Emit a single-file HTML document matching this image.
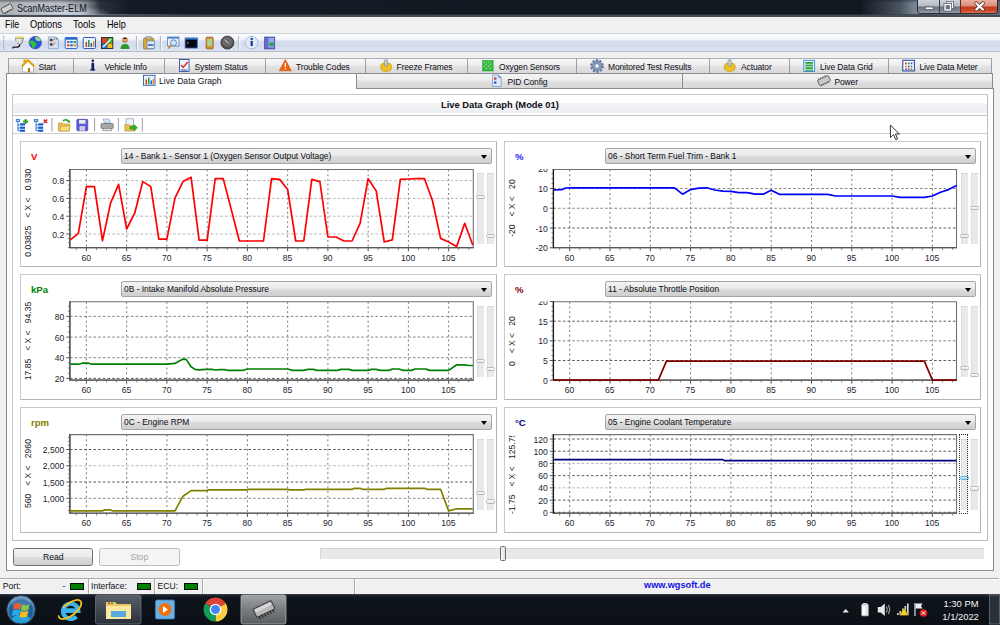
<!DOCTYPE html>
<html><head><meta charset="utf-8"><style>
*{box-sizing:border-box;margin:0;padding:0}
html,body{width:1000px;height:625px;overflow:hidden;background:#f0f0f0;font-family:"Liberation Sans",sans-serif;font-size:8.5px;color:#000}
.a{position:absolute}
.t{position:absolute;white-space:nowrap;line-height:1}
svg{position:absolute;overflow:visible}

.dd{border:1px solid #a5a5a5;border-radius:2px;background:linear-gradient(#f3f3f3 0%,#ebebeb 45%,#dddddd 50%,#cfcfcf 100%)}
.ddt{position:absolute;left:2.6px;top:3.2px;line-height:1;white-space:nowrap;font-size:8.4px;color:#0a0a14}
.dda{position:absolute;right:3.6px;top:6px;width:0;height:0;border-left:3.5px solid transparent;border-right:3.5px solid transparent;border-top:4px solid #000}
.gd{stroke:#7c7c7c;stroke-width:1;stroke-dasharray:2 2.7;fill:none}
.gh{stroke-width:1;stroke-dasharray:2.6 2.1;fill:none}
.tk{stroke:#505050;stroke-width:1}
.tm{stroke:#7a7a7a;stroke-width:0.9}
.lb{font-family:"Liberation Sans",sans-serif;font-size:8.6px;fill:#1e1e30}
.lr{font-family:"Liberation Sans",sans-serif;font-size:8.6px;fill:#1a1a1a}
.sl{background:#e7e9ea;border-top:1px solid #d8d9da;border-left:1px solid #dcdddf}
.th{border:1px solid #b9b9b9;border-radius:1.5px;background:linear-gradient(#fdfdfd,#e6e6e6)}
.thf{border-color:#6ab0dc;background:linear-gradient(#d8f0fc,#8fd0f0)}
.tab{position:absolute;top:58px;height:15px;border:1px solid #9a9ea6;border-top-color:#aeb0b6;border-bottom:none;background:linear-gradient(#f6f6f6 0%,#efefef 40%,#e2e2e2 58%,#d9d9d9 100%)}
.tab2{position:absolute;top:72.5px;height:16px;border:1px solid #898c95;background:linear-gradient(#f4f4f4 0%,#ededed 40%,#e0e0e0 58%,#d8d8d8 100%)}
.tt{position:absolute;top:3.6px;line-height:1;white-space:nowrap;font-size:8.45px;letter-spacing:-0.1px;color:#0c0c16}
.btn{position:absolute;border:1px solid #707070;border-radius:2.5px;background:linear-gradient(#f2f2f2 0%,#ebebeb 50%,#dddddd 51%,#cfcfcf 100%)}
.sbp{position:absolute;top:578.5px;height:15px;border-left:1px solid #a8a8a8}
.gb{position:absolute;top:583px;width:13.5px;height:7px;background:#008000;border:1px solid #0a0a0a}
</style></head>
<body>

<!-- title bar -->
<div class="a" style="left:0;top:0;width:1000px;height:16px;background:linear-gradient(90deg,#aeb4ba 0px,#b9bec3 60px,#8a9096 86px,#2a323c 100px,#141b24 130px,#111820 860px,#4a5460 900px,#7a8694 915px,#5a6470 1000px)"></div>
<div class="a" style="left:0;top:0;width:1000px;height:3px;background:linear-gradient(rgba(20,26,34,.45),rgba(20,26,34,0))"></div><div class="a" style="left:0;top:0;width:200px;height:15px;background:radial-gradient(ellipse 40px 8px at 72px 14px,rgba(215,230,245,.7),rgba(215,230,245,0))"></div>
<div class="a" style="left:0;top:13.8px;width:1000px;height:1.6px;background:linear-gradient(90deg,#9aa6b2 0px,#b8c8d8 80px,#5a6470 110px,#2a3038 200px,#2a3038 860px,#6a7480 1000px);opacity:.9"></div><div class="a" style="left:0;top:15.4px;width:1000px;height:1.3px;background:#454b53"></div>
<svg class="a" style="left:0;top:0" width="16" height="16"><g transform="translate(7,8.6) rotate(-28)"><rect x="-5.5" y="-2.8" width="11" height="5.6" rx="1" fill="#d0d0d0" stroke="#404040" stroke-width="0.8"/><path d="M-4,2.8 v1.4 M-1.5,2.8 v1.4 M1,2.8 v1.4 M3.5,2.8 v1.4" stroke="#404040" stroke-width="0.7"/></g></svg>
<div class="t" style="left:16.5px;top:3.7px;font-size:10.4px;color:#141826;transform:scaleX(0.868);transform-origin:0 0">ScanMaster-ELM</div>
<div class="a" style="left:917px;top:0;width:81px;height:13.8px;border:1px solid #2a2f36;border-top:none;border-radius:0 0 4px 4px;overflow:hidden">
 <div class="a" style="left:0;top:0;width:22px;height:13px;background:linear-gradient(#cfd3d8 0%,#b3b9c0 48%,#6b7581 52%,#7e8893 85%,#9aa3ac 100%);border-right:1px solid #3a4048"></div>
 <div class="a" style="left:22px;top:0;width:21px;height:13px;background:linear-gradient(#cfd3d8 0%,#b3b9c0 48%,#6b7581 52%,#7e8893 85%,#9aa3ac 100%);border-right:1px solid #6a2a20"></div>
 <div class="a" style="left:43px;top:0;width:38px;height:13px;background:linear-gradient(#eab0a2 0%,#dc8a78 48%,#c4391c 52%,#cf4a28 85%,#e07a5a 100%)"></div>
</div>
<svg class="a" style="left:910px;top:0" width="90" height="16">
 <rect x="15.2" y="7" width="8" height="2.6" fill="#fff" stroke="#3a4450" stroke-width="0.7"/>
 <rect x="37.2" y="2.2" width="5.4" height="5.4" fill="none" stroke="#3a4450" stroke-width="2.4"/>
 <rect x="37.2" y="2.2" width="5.4" height="5.4" fill="none" stroke="#fff" stroke-width="1.2"/>
 <rect x="35" y="4.4" width="5.6" height="5.6" fill="#7e8893" stroke="#3a4450" stroke-width="2.6"/>
 <rect x="35" y="4.4" width="5.6" height="5.6" fill="#6b7581" stroke="#fff" stroke-width="1.4"/>
 <path d="M66.2,3.2 L73,9.6 M73,3.2 L66.2,9.6" stroke="#4a2a28" stroke-width="3.6" stroke-linecap="round"/>
 <path d="M66.2,3.2 L73,9.6 M73,3.2 L66.2,9.6" stroke="#fff" stroke-width="2.2" stroke-linecap="round"/>
</svg>
<!-- menu -->
<div class="t" style="left:4.6px;top:20.2px;font-size:10.2px;transform:scaleX(0.87);transform-origin:0 0">File</div>
<div class="t" style="left:30.3px;top:20.2px;font-size:10.2px;transform:scaleX(0.91);transform-origin:0 0">Options</div>
<div class="t" style="left:73.4px;top:20.2px;font-size:10.2px;transform:scaleX(0.93);transform-origin:0 0">Tools</div>
<div class="t" style="left:107.4px;top:20.2px;font-size:10.2px;transform:scaleX(0.895);transform-origin:0 0">Help</div>
<!-- toolbar -->
<div class="a" style="left:0;top:33px;width:1000px;height:19px;border-top:1px solid #cdd2da;border-bottom:1px solid #b4bcc8;background:linear-gradient(#fcfdfe 0%,#f0f3f9 33%,#d8def0 42%,#d3dbee 70%,#dde4f4 100%)"></div>
<svg class="a" style="left:0;top:0" width="300" height="60"><rect x="3" y="35.5" width="1.2" height="1.2" fill="#9aa4b4"/><rect x="3" y="37.7" width="1.2" height="1.2" fill="#9aa4b4"/><rect x="3" y="39.9" width="1.2" height="1.2" fill="#9aa4b4"/><rect x="3" y="42.1" width="1.2" height="1.2" fill="#9aa4b4"/><rect x="3" y="44.3" width="1.2" height="1.2" fill="#9aa4b4"/><rect x="3" y="46.5" width="1.2" height="1.2" fill="#9aa4b4"/><rect x="3" y="48.7" width="1.2" height="1.2" fill="#9aa4b4"/><path d="M15.4,38 h8.2 l-1.2,4 q-0.5,1.8 -2.6,2 h-0.8 q-2,-0.2 -2.5,-2z" fill="#d4d4d4" stroke="#555" stroke-width="0.6"/><rect x="15.6" y="36.6" width="7.8" height="1.6" fill="#e8d84a"/><path d="M16.8,39 v4 M19.5,39 v4.8" stroke="#fff" stroke-width="0.8"/><path d="M19.8,44.2 q0,2.6 -2.4,3 h-3.6 q-1.2,0 -1.2,1.2" fill="none" stroke="#1a1a1a" stroke-width="1.3"/><circle cx="35.3" cy="42.6" r="6.3" fill="#2a52d8" stroke="#3a4a90" stroke-width="0.5"/><path d="M35,37 q4,-0.5 6.2,3 q-1.5,1.8 -3.8,1 q-2.2,-0.6 -2.4,-4z" fill="#8fdc8a"/><path d="M29.6,41.5 q2,-1.5 4,-0.5 l1.6,1.5 q1.8,0.2 1.4,2.2 l-1.4,1.4 q-0.3,2.4 -2,2.6 q-1.2,-1.6 -1.6,-3.6 q-1.8,-1 -2,-3.6z" fill="#30c030"/><path d="M48.4,36.9 h7.4 l2.6,2.6 v9.1 h-10z" fill="#cfe4f6" stroke="#7a9cc8" stroke-width="0.7"/><path d="M55.8,36.9 v2.6 h2.6z" fill="#4a8ad8"/><rect x="49.8" y="38.8" width="2.6" height="2.4" fill="#3a3a3a"/><rect x="49.8" y="43.2" width="2.6" height="2.4" fill="#3a3a3a"/><path d="M50.6,40 l1.2,1.2 l3.6,-3 M50.6,44.4 l1.2,1.2 l3.6,-3" fill="none" stroke="#e04a20" stroke-width="0.9"/><rect x="65.2" y="37.5" width="12" height="11" rx="1" fill="#e6f0fb" stroke="#2a6cc8" stroke-width="1"/><rect x="65.2" y="37.5" width="12" height="2.2" fill="#2a6cc8"/><rect x="67" y="41" width="2.5" height="2" fill="#8060c0"/><rect x="70.3" y="41" width="2.5" height="2" fill="#2080e0"/><rect x="73.6" y="41" width="2.5" height="2" fill="#20a040"/><rect x="67" y="44.3" width="2.5" height="2" fill="#e05020"/><rect x="70.3" y="44.3" width="2.5" height="2" fill="#2060c0"/><rect x="73.6" y="44.3" width="2.5" height="2" fill="#e09020"/><rect x="83.2" y="37.5" width="12.3" height="11" rx="1" fill="#eaf2fb" stroke="#2a5cb0" stroke-width="1"/><rect x="85.5" y="42" width="1.6" height="5" fill="#d04020"/><rect x="88" y="40" width="1.6" height="7" fill="#20a040"/><rect x="90.5" y="43" width="1.6" height="4" fill="#2060d0"/><rect x="93" y="41" width="1.4" height="6" fill="#e08020"/><rect x="101" y="37" width="12.3" height="12" fill="#333"/><path d="M102,38 h5 v5 h-5z" fill="#e04020"/><path d="M107.5,38 h4.8 v5 h-4.8z" fill="#3fae3a"/><path d="M102,43.5 h5 v4.5 h-5z" fill="#2a7ae0"/><path d="M107.5,43.5 h4.8 v4.5 h-4.8z" fill="#f0c020"/><path d="M103,47 l8,-8" stroke="#fff" stroke-width="1.2"/><circle cx="125" cy="40" r="2.6" fill="#a0501a"/><path d="M120.5,49 q0,-5 4.5,-5 q4.5,0 4.5,5z" fill="#2a9a2a"/><circle cx="125" cy="39.5" r="2.4" fill="#e8a060"/><path d="M122.5,39 q2.5,-3 5,0" fill="#222"/><rect x="135.9" y="36" width="1" height="14" fill="#a8acb4"/><rect x="136.9" y="36" width="1" height="14" fill="#ffffff"/><rect x="159.9" y="36" width="1" height="14" fill="#a8acb4"/><rect x="160.9" y="36" width="1" height="14" fill="#ffffff"/><rect x="238.3" y="36" width="1" height="14" fill="#a8acb4"/><rect x="239.3" y="36" width="1" height="14" fill="#ffffff"/><rect x="143.6" y="38" width="10" height="11" rx="1" fill="#e0a830" stroke="#8a6a20" stroke-width="0.7"/><rect x="146" y="36.5" width="5" height="2.5" fill="#c0c0c0" stroke="#777" stroke-width="0.5"/><rect x="147" y="41" width="7.5" height="7.5" fill="#dce8f8" stroke="#5080c0" stroke-width="0.7"/><rect x="148" y="44" width="5.5" height="2" fill="#5080c0"/><rect x="167.6" y="37" width="11.4" height="9" fill="#e8f0fa" stroke="#4a80c8" stroke-width="0.8"/><rect x="167.6" y="37" width="11.4" height="1.6" fill="#4a80c8"/><circle cx="173.5" cy="42.8" r="3" fill="#cfe6f8" stroke="#6a8ab0" stroke-width="1"/><path d="M171.3,45 l-3,3.5" stroke="#d08020" stroke-width="1.6"/><rect x="185.2" y="38" width="12" height="10" fill="#050510" stroke="#2a5ab0" stroke-width="0.9"/><rect x="185.2" y="38" width="12" height="1.6" fill="#3a78d8"/><path d="M187,42 l1.5,1 -1.5,1" stroke="#ccc" stroke-width="0.6" fill="none"/><rect x="206" y="37" width="7.3" height="12" rx="1.2" fill="#d88a30" stroke="#8a5a20" stroke-width="0.6"/><rect x="207.3" y="39" width="4.7" height="7" fill="#a8d890"/><circle cx="227.4" cy="42.6" r="6.5" fill="#505050" stroke="#303030" stroke-width="0.8"/><circle cx="227.4" cy="41.6" r="5" fill="#6a6a6a"/><path d="M224.5,39.5 l4,4" stroke="#ddd" stroke-width="0.9"/><circle cx="251.6" cy="42.6" r="6.3" fill="#dfeaf6" stroke="#9fb4cc" stroke-width="0.8"/><rect x="250.6" y="41" width="2.2" height="5" fill="#1a3aa0"/><circle cx="251.7" cy="39" r="1.2" fill="#1a3aa0"/><rect x="264.4" y="37" width="10.4" height="12" fill="#6a6ad0" stroke="#4040a0" stroke-width="0.6"/><rect x="268.5" y="38" width="5.3" height="9.5" fill="#8fb0e8"/><rect x="269.5" y="42.5" width="4" height="3.5" fill="#20a040"/></svg>
<!-- tabs row 1 -->
<div class="tab" style="left:8px;width:66px"><span class="tt" style="left:29.5px">Start</span></div>
<div class="tab" style="left:73px;width:92px"><span class="tt" style="left:30.5px">Vehicle Info</span></div>
<div class="tab" style="left:164px;width:102px"><span class="tt" style="left:29.5px">System Status</span></div>
<div class="tab" style="left:265px;width:101px"><span class="tt" style="left:30px">Trouble Codes</span></div>
<div class="tab" style="left:365px;width:103px"><span class="tt" style="left:30.5px">Freeze Frames</span></div>
<div class="tab" style="left:467px;width:110px"><span class="tt" style="left:31px">Oxygen Sensors</span></div>
<div class="tab" style="left:576px;width:134px"><span class="tt" style="left:31px">Monitored Test Results</span></div>
<div class="tab" style="left:709px;width:81px"><span class="tt" style="left:31px">Actuator</span></div>
<div class="tab" style="left:789px;width:100px"><span class="tt" style="left:30px">Live Data Grid</span></div>
<div class="tab" style="left:888px;width:104px"><span class="tt" style="left:30.5px">Live Data Meter</span></div>
<!-- content panel -->
<div class="a" style="left:6px;top:88px;width:988px;height:483px;background:#fff;border:1px solid #898c95"></div>
<div class="a" style="left:6px;top:72.5px;width:351px;height:16.5px;background:#fff;border:1px solid #898c95;border-bottom:none"></div>
<div class="tab2" style="left:356px;width:327px"><span class="tt" style="left:150.5px;top:4px">PID Config</span></div>
<div class="tab2" style="left:682px;width:311px"><span class="tt" style="left:151.5px;top:4px">Power</span></div>
<div class="t" style="left:159px;top:76.6px;font-size:8.6px;color:#10101a">Live Data Graph</div>
<svg class="a" style="left:0;top:0" width="1000" height="100"><path d="M22.5,66 l5.5,-5 l5.5,5 v6 h-11z" fill="#fff" stroke="#8a8a8a" stroke-width="0.6"/><path d="M21.8,66.3 l6.2,-6 l6.2,6" fill="none" stroke="#e0a000" stroke-width="2"/><rect x="28" y="68" width="2" height="4" fill="#b07010"/><rect x="23.5" y="59.5" width="2.5" height="3" fill="#e8a800"/><rect x="91.5" y="62.8" width="2.6" height="7.6" fill="#101a60"/><rect x="90.3" y="69.2" width="4.8" height="1.3" fill="#101a60"/><circle cx="92.8" cy="60.8" r="1.3" fill="#101a60"/><rect x="179.5" y="59.5" width="9.5" height="12" fill="#f4f8ff" stroke="#3050a0" stroke-width="0.9"/><path d="M181,65 l2.2,2.5 l4.5,-5.5" fill="none" stroke="#e02020" stroke-width="1.4"/><rect x="181" y="69.5" width="6.5" height="1" fill="#3050a0"/><path d="M285.3,59.5 l6,11.3 h-12z" fill="#f06010" stroke="#c04000" stroke-width="0.5"/><rect x="284.7" y="63" width="1.3" height="4" fill="#fff"/><rect x="284.7" y="68" width="1.3" height="1.3" fill="#fff"/><path d="M380.6,66.5 q0,-3 3,-3.4 h5 q3,0.4 3,3.4 v1.6 q-0.4,2.6 -3,3 l-2.6,0.8 l-2.6,-0.8 q-2.6,-0.4 -2.8,-3z" fill="#ecc020" stroke="#b88a10" stroke-width="0.5"/><rect x="384.4" y="59.6" width="3.2" height="6.6" rx="1.2" fill="#c8c8cc" stroke="#70747a" stroke-width="0.5"/><rect x="482.6" y="60.5" width="10.5" height="10.5" fill="#3ab840" stroke="#20a030" stroke-width="0.6"/><rect x="483.6" y="61.5" width="1.1" height="1.1" fill="#c8f4c0"/><rect x="483.6" y="65.7" width="1.1" height="1.1" fill="#c8f4c0"/><rect x="485.70000000000005" y="63.6" width="1.1" height="1.1" fill="#c8f4c0"/><rect x="485.70000000000005" y="67.8" width="1.1" height="1.1" fill="#c8f4c0"/><rect x="487.8" y="61.5" width="1.1" height="1.1" fill="#c8f4c0"/><rect x="487.8" y="65.7" width="1.1" height="1.1" fill="#c8f4c0"/><rect x="489.90000000000003" y="63.6" width="1.1" height="1.1" fill="#c8f4c0"/><rect x="489.90000000000003" y="67.8" width="1.1" height="1.1" fill="#c8f4c0"/><circle cx="597" cy="66" r="5.9" fill="none" stroke="#5a6e94" stroke-width="1.8" stroke-dasharray="2.2 1.5"/><circle cx="597" cy="66" r="4.9" fill="#8298bc" stroke="#4e6288" stroke-width="0.5"/><circle cx="597" cy="66" r="2.2" fill="#eef2f8" stroke="#4e6288" stroke-width="0.4"/><path d="M724.2,66.5 q0,-3 3,-3.4 h5 q3,0.4 3,3.4 v1.6 q-0.4,2.6 -3,3 l-2.6,0.8 l-2.6,-0.8 q-2.6,-0.4 -2.8,-3z" fill="#ecc020" stroke="#b88a10" stroke-width="0.5"/><rect x="728" y="59.6" width="3.2" height="6.6" rx="1.2" fill="#c8c8cc" stroke="#70747a" stroke-width="0.5"/><rect x="803.8" y="60.3" width="10.8" height="11.2" fill="#e8f4ff" stroke="#2a88d0" stroke-width="0.9"/><rect x="805.4" y="62" width="7.6" height="1.8" fill="#30a040"/><rect x="805.4" y="64.6" width="7.6" height="1.8" fill="#30a040"/><rect x="805.4" y="67.2" width="7.6" height="1.8" fill="#30a040"/><rect x="805.4" y="69.6" width="7.6" height="1.2" fill="#30a040"/><rect x="902.8" y="60.3" width="11.6" height="10.6" fill="#fff" stroke="#1a3aa0" stroke-width="1"/><rect x="905" y="62.5" width="1.8" height="1.8" fill="#e03030"/><rect x="907.8" y="62.5" width="1.8" height="1.8" fill="#30a030"/><rect x="910.6" y="62.5" width="1.8" height="1.8" fill="#3050e0"/><rect x="905" y="65.6" width="1.8" height="1.8" fill="#e08020"/><rect x="907.8" y="65.6" width="1.8" height="1.8" fill="#a030c0"/><rect x="910.6" y="65.6" width="1.8" height="1.8" fill="#20a0a0"/><rect x="905" y="68.3" width="1.8" height="1.6" fill="#3050e0"/><rect x="907.8" y="68.3" width="1.8" height="1.6" fill="#e03030"/><rect x="910.6" y="68.3" width="1.8" height="1.6" fill="#30a030"/><rect x="143.5" y="75.3" width="11.5" height="10" fill="#eaf2fb" stroke="#2a5cb0" stroke-width="0.9"/><rect x="145.5" y="79.5" width="1.5" height="4.8" fill="#d04020"/><rect x="148" y="77.5" width="1.5" height="6.8" fill="#20a040"/><rect x="150.5" y="80.5" width="1.5" height="3.8" fill="#2060d0"/><rect x="152.6" y="79" width="1.3" height="5.3" fill="#e08020"/><path d="M492.5,75 h6 l2.8,2.8 v8.7 h-8.8z" fill="#dbe8f7" stroke="#6a8cc0" stroke-width="0.7"/><path d="M498.5,75 v2.8 h2.8z" fill="#4a80d0"/><rect x="494" y="77.5" width="2.4" height="2.2" fill="#d03a20"/><rect x="494" y="81.5" width="2.4" height="2.2" fill="#2a5ac0"/><g transform="translate(824,80.5) rotate(-25)"><rect x="-6" y="-3" width="12" height="6" rx="1" fill="#c8c8c8" stroke="#505050" stroke-width="0.8"/><path d="M-4.5,3 v1.5 M-2,3 v1.5 M0.5,3 v1.5 M3,3 v1.5 M-4.5,-3 v-1.5 M-2,-3 v-1.5 M0.5,-3 v-1.5 M3,-3 v-1.5" stroke="#505050" stroke-width="0.7"/></g></svg>
<!-- inner panel -->
<div class="a" style="left:12px;top:94px;width:976px;height:447px;border:1px solid #c8c8c8;border-right-color:#bcbcbc;border-bottom-color:#bcbcbc"></div>
<div class="a" style="left:13px;top:95px;width:974px;height:21px;background:linear-gradient(#ffffff 0%,#ffffff 38%,#f3f4f7 40%,#eceef2 88%,#ffffff 89%,#ffffff 94%);border-bottom:1.3px solid #c2c2c2"></div>
<div class="t" style="left:441px;top:101.4px;font-size:9.35px;font-weight:bold;color:#101018">Live Data Graph (Mode 01)</div>
<div class="a" style="left:13px;top:133px;width:974px;height:1px;background:#cfcfcf"></div>
<svg class="a" style="left:0;top:0" width="200" height="140"><rect x="16.2" y="119.5" width="3.5" height="2.2" fill="#9ecbf0" stroke="#1a6ad0" stroke-width="0.7"/><path d="M17.9,121.7 v9 M17.9,125 h2 M17.9,128 h2 M17.9,130.7 h2" stroke="#1a6ad0" stroke-width="0.9" fill="none"/><rect x="20.0" y="123.3" width="5" height="2.2" fill="#1a5ad0"/><rect x="20.0" y="126.6" width="5" height="2.2" fill="#1a5ad0"/><rect x="20.0" y="129.6" width="5" height="2.2" fill="#1a5ad0"/><path d="M25.6,119 v5 M23.1,121.5 h5" stroke="#20a020" stroke-width="1.8"/><rect x="34.4" y="119.5" width="3.5" height="2.2" fill="#9ecbf0" stroke="#1a6ad0" stroke-width="0.7"/><path d="M36.1,121.7 v9 M36.1,125 h2 M36.1,128 h2 M36.1,130.7 h2" stroke="#1a6ad0" stroke-width="0.9" fill="none"/><rect x="38.199999999999996" y="123.3" width="5" height="2.2" fill="#1a5ad0"/><rect x="38.199999999999996" y="126.6" width="5" height="2.2" fill="#1a5ad0"/><rect x="38.199999999999996" y="129.6" width="5" height="2.2" fill="#1a5ad0"/><path d="M43.7,119.5 l3.5,3.5 M47.2,119.5 l-3.5,3.5" stroke="#e02020" stroke-width="1.5"/><rect x="51.4" y="118" width="1" height="13.5" fill="#a0a0a0"/><rect x="94.1" y="118" width="1" height="13.5" fill="#a0a0a0"/><rect x="117.9" y="118" width="1" height="13.5" fill="#a0a0a0"/><rect x="141.8" y="118" width="1" height="13.5" fill="#a0a0a0"/><path d="M58.5,123 h4 l1,1 h6 v7 h-11z" fill="#e8c050" stroke="#b08a20" stroke-width="0.6"/><path d="M59.5,131 l2,-5 h9 l-2,5z" fill="#f8dc80" stroke="#b08a20" stroke-width="0.5"/><path d="M63,121 q4,-3 6,1.5" fill="none" stroke="#30a030" stroke-width="1.6"/><path d="M68,121 l2.5,2.5 l-1,-3.5z" fill="#30a030"/><rect x="76.8" y="119.3" width="11" height="11.5" rx="1" fill="#5a5ad8" stroke="#3a3aa0" stroke-width="0.6"/><rect x="79" y="120" width="6.5" height="3.7" fill="#e8e8f0"/><rect x="79.5" y="126" width="5.5" height="4.8" fill="#c8c8e0"/><path d="M103,119 h6 l1.5,4 h-6z" fill="#cfe4f8" stroke="#6a8ab0" stroke-width="0.5"/><rect x="101" y="123.5" width="12.3" height="5" rx="1.2" fill="#a8a8a8" stroke="#505050" stroke-width="0.6"/><rect x="103" y="128.3" width="8.5" height="2.5" fill="#e8e8e8" stroke="#606060" stroke-width="0.5"/><rect x="126" y="118.8" width="7.5" height="8.5" fill="#eef4fb" stroke="#6a8ab0" stroke-width="0.6"/><path d="M124.8,124.5 h4 l1,1 h5 v5.5 h-10z" fill="#e8c050" stroke="#b08a20" stroke-width="0.5"/><path d="M130,126.5 h4 v-2 l3.5,3.3 l-3.5,3.3 v-2 h-4z" fill="#30b030" stroke="#208020" stroke-width="0.5"/></svg>

<div class="a" style="left:20px;top:141px;width:477px;height:126px;border:1px solid #c9c9c9;border-right-color:#b5b5b5;border-bottom-color:#b5b5b5"></div>
<div class="t" style="left:31px;top:152px;font-size:9.6px;font-weight:bold;color:#ff0000">V</div>
<div class="a dd" style="left:120.5px;top:148px;width:371px;height:16px"><span class="ddt">14 - Bank 1 - Sensor 1 (Oxygen Sensor Output Voltage)</span><span class="dda"></span></div>
<svg class="a" style="left:0;top:0" width="1000" height="625"><line x1="86.4" y1="169.5" x2="86.4" y2="247.7" class="gd"/><line x1="126.65" y1="169.5" x2="126.65" y2="247.7" class="gd"/><line x1="166.9" y1="169.5" x2="166.9" y2="247.7" class="gd"/><line x1="207.15" y1="169.5" x2="207.15" y2="247.7" class="gd"/><line x1="247.4" y1="169.5" x2="247.4" y2="247.7" class="gd"/><line x1="287.65" y1="169.5" x2="287.65" y2="247.7" class="gd"/><line x1="327.9" y1="169.5" x2="327.9" y2="247.7" class="gd"/><line x1="368.15" y1="169.5" x2="368.15" y2="247.7" class="gd"/><line x1="408.4" y1="169.5" x2="408.4" y2="247.7" class="gd"/><line x1="448.65" y1="169.5" x2="448.65" y2="247.7" class="gd"/><line x1="69.9" y1="180.6" x2="473.3" y2="180.6" class="gh" stroke="#b6b6b6"/><line x1="69.9" y1="198.4" x2="473.3" y2="198.4" class="gh" stroke="#b6b6b6"/><line x1="69.9" y1="216.2" x2="473.3" y2="216.2" class="gh" stroke="#b6b6b6"/><line x1="69.9" y1="234" x2="473.3" y2="234" class="gh" stroke="#b6b6b6"/><line x1="67.9" y1="247.35" x2="69.9" y2="247.35" class="tm"/><line x1="67.9" y1="242.9" x2="69.9" y2="242.9" class="tm"/><line x1="67.9" y1="238.45" x2="69.9" y2="238.45" class="tm"/><line x1="66.3" y1="234" x2="69.9" y2="234" class="tk"/><line x1="67.9" y1="229.55" x2="69.9" y2="229.55" class="tm"/><line x1="67.9" y1="225.1" x2="69.9" y2="225.1" class="tm"/><line x1="67.9" y1="220.65" x2="69.9" y2="220.65" class="tm"/><line x1="66.3" y1="216.2" x2="69.9" y2="216.2" class="tk"/><line x1="67.9" y1="211.75" x2="69.9" y2="211.75" class="tm"/><line x1="67.9" y1="207.3" x2="69.9" y2="207.3" class="tm"/><line x1="67.9" y1="202.85" x2="69.9" y2="202.85" class="tm"/><line x1="66.3" y1="198.4" x2="69.9" y2="198.4" class="tk"/><line x1="67.9" y1="193.95" x2="69.9" y2="193.95" class="tm"/><line x1="67.9" y1="189.5" x2="69.9" y2="189.5" class="tm"/><line x1="67.9" y1="185.05" x2="69.9" y2="185.05" class="tm"/><line x1="66.3" y1="180.6" x2="69.9" y2="180.6" class="tk"/><line x1="67.9" y1="176.15" x2="69.9" y2="176.15" class="tm"/><line x1="67.9" y1="171.7" x2="69.9" y2="171.7" class="tm"/><line x1="76.34" y1="247.7" x2="76.34" y2="250" class="tm"/><line x1="86.4" y1="247.7" x2="86.4" y2="251.3" class="tk"/><line x1="96.46" y1="247.7" x2="96.46" y2="250" class="tm"/><line x1="106.53" y1="247.7" x2="106.53" y2="250" class="tm"/><line x1="116.59" y1="247.7" x2="116.59" y2="250" class="tm"/><line x1="126.65" y1="247.7" x2="126.65" y2="251.3" class="tk"/><line x1="136.71" y1="247.7" x2="136.71" y2="250" class="tm"/><line x1="146.78" y1="247.7" x2="146.78" y2="250" class="tm"/><line x1="156.84" y1="247.7" x2="156.84" y2="250" class="tm"/><line x1="166.9" y1="247.7" x2="166.9" y2="251.3" class="tk"/><line x1="176.96" y1="247.7" x2="176.96" y2="250" class="tm"/><line x1="187.03" y1="247.7" x2="187.03" y2="250" class="tm"/><line x1="197.09" y1="247.7" x2="197.09" y2="250" class="tm"/><line x1="207.15" y1="247.7" x2="207.15" y2="251.3" class="tk"/><line x1="217.21" y1="247.7" x2="217.21" y2="250" class="tm"/><line x1="227.28" y1="247.7" x2="227.28" y2="250" class="tm"/><line x1="237.34" y1="247.7" x2="237.34" y2="250" class="tm"/><line x1="247.4" y1="247.7" x2="247.4" y2="251.3" class="tk"/><line x1="257.46" y1="247.7" x2="257.46" y2="250" class="tm"/><line x1="267.53" y1="247.7" x2="267.53" y2="250" class="tm"/><line x1="277.59" y1="247.7" x2="277.59" y2="250" class="tm"/><line x1="287.65" y1="247.7" x2="287.65" y2="251.3" class="tk"/><line x1="297.71" y1="247.7" x2="297.71" y2="250" class="tm"/><line x1="307.78" y1="247.7" x2="307.78" y2="250" class="tm"/><line x1="317.84" y1="247.7" x2="317.84" y2="250" class="tm"/><line x1="327.9" y1="247.7" x2="327.9" y2="251.3" class="tk"/><line x1="337.96" y1="247.7" x2="337.96" y2="250" class="tm"/><line x1="348.02" y1="247.7" x2="348.02" y2="250" class="tm"/><line x1="358.09" y1="247.7" x2="358.09" y2="250" class="tm"/><line x1="368.15" y1="247.7" x2="368.15" y2="251.3" class="tk"/><line x1="378.21" y1="247.7" x2="378.21" y2="250" class="tm"/><line x1="388.27" y1="247.7" x2="388.27" y2="250" class="tm"/><line x1="398.34" y1="247.7" x2="398.34" y2="250" class="tm"/><line x1="408.4" y1="247.7" x2="408.4" y2="251.3" class="tk"/><line x1="418.46" y1="247.7" x2="418.46" y2="250" class="tm"/><line x1="428.53" y1="247.7" x2="428.53" y2="250" class="tm"/><line x1="438.59" y1="247.7" x2="438.59" y2="250" class="tm"/><line x1="448.65" y1="247.7" x2="448.65" y2="251.3" class="tk"/><line x1="458.71" y1="247.7" x2="458.71" y2="250" class="tm"/><line x1="468.78" y1="247.7" x2="468.78" y2="250" class="tm"/><path d="M69.9,247.7 V169.5 H473.3 V247.7 Z" fill="none" stroke="#727272" stroke-width="1.1"/><line x1="69.9" y1="247.7" x2="473.8" y2="247.7" stroke="#5a5a5a" stroke-width="1.2"/><line x1="69.9" y1="169" x2="69.9" y2="248.2" stroke="#4a4a4a" stroke-width="1.3"/><clipPath id="cL141"><rect x="69.9" y="168.5" width="404" height="80.7"/></clipPath><polyline points="70.3,239.9 78.35,233.4 86.4,186.6 94.45,186.6 102.5,240.6 110.55,203.2 118.6,184.4 126.65,229 134.7,213.2 142.75,181.6 150.8,186.6 158.85,239.2 166.9,239.2 174.95,198.1 183,181.6 191.05,177.2 199.1,240.2 207.15,240.2 215.2,178.7 223.25,178.7 231.3,209.6 239.35,241 247.4,241 255.45,241 263.5,241 271.55,178.7 279.6,179.4 287.65,189.5 295.7,241 303.75,241 311.8,179.4 319.85,181.6 327.9,237 335.95,237 344,241 352.05,241 360.1,223.3 368.15,178.7 376.2,190.9 384.25,242 392.3,239.9 400.35,179.4 408.4,179 416.45,178.7 424.5,178.7 432.55,201 440.6,238.4 448.65,242 456.7,246.4 464.75,223.3 472.8,245" fill="none" stroke="#ff0000" stroke-width="1.7" stroke-linejoin="round" clip-path="url(#cL141)"/><clipPath id="lL141"><rect x="29.9" y="168.9" width="40" height="88.2"/></clipPath><g clip-path="url(#lL141)"><text x="64.3" y="184.1" text-anchor="end" class="lb">0.8</text><text x="64.3" y="201.9" text-anchor="end" class="lb">0.6</text><text x="64.3" y="219.7" text-anchor="end" class="lb">0.4</text><text x="64.3" y="237.5" text-anchor="end" class="lb">0.2</text></g><text x="86.2" y="260.9" text-anchor="middle" class="lb">60</text><text x="126.45" y="260.9" text-anchor="middle" class="lb">65</text><text x="166.7" y="260.9" text-anchor="middle" class="lb">70</text><text x="206.95" y="260.9" text-anchor="middle" class="lb">75</text><text x="247.2" y="260.9" text-anchor="middle" class="lb">80</text><text x="287.45" y="260.9" text-anchor="middle" class="lb">85</text><text x="327.7" y="260.9" text-anchor="middle" class="lb">90</text><text x="367.95" y="260.9" text-anchor="middle" class="lb">95</text><text x="408.2" y="260.9" text-anchor="middle" class="lb">100</text><text x="448.45" y="260.9" text-anchor="middle" class="lb">105</text><clipPath id="rL141"><rect x="20" y="141" width="20" height="120"/></clipPath><g clip-path="url(#rL141)"><text transform="translate(31.3,207.6) rotate(-90)" text-anchor="middle" class="lr">X</text><text transform="translate(31.3,215.2) rotate(-90)" text-anchor="middle" class="lr">&lt;</text><text transform="translate(31.3,200) rotate(-90)" text-anchor="middle" class="lr">&lt;</text><text transform="translate(31.3,225.7) rotate(-90)" text-anchor="end" class="lr">0.03825</text><text transform="translate(31.3,190.2) rotate(-90)" text-anchor="start" class="lr">0.930</text></g></svg>
<div class="a sl" style="left:477px;top:172.8px;width:6.8px;height:71.5px"></div>
<div class="a th" style="left:476px;top:195px;width:9px;height:4.2px"></div>
<div class="a sl" style="left:487.2px;top:172.8px;width:6.8px;height:71.5px"></div>
<div class="a th" style="left:486.2px;top:234px;width:9px;height:4.2px"></div><div class="a" style="left:504px;top:141px;width:477px;height:126px;border:1px solid #c9c9c9;border-right-color:#b5b5b5;border-bottom-color:#b5b5b5"></div>
<div class="t" style="left:515px;top:152px;font-size:9.6px;font-weight:bold;color:#2020ff">%</div>
<div class="a dd" style="left:604.5px;top:148px;width:371px;height:16px"><span class="ddt">06 - Short Term Fuel Trim - Bank 1</span><span class="dda"></span></div>
<svg class="a" style="left:0;top:0" width="1000" height="625"><line x1="569.7" y1="169.5" x2="569.7" y2="247.7" class="gd"/><line x1="610" y1="169.5" x2="610" y2="247.7" class="gd"/><line x1="650.3" y1="169.5" x2="650.3" y2="247.7" class="gd"/><line x1="690.6" y1="169.5" x2="690.6" y2="247.7" class="gd"/><line x1="730.9" y1="169.5" x2="730.9" y2="247.7" class="gd"/><line x1="771.2" y1="169.5" x2="771.2" y2="247.7" class="gd"/><line x1="811.5" y1="169.5" x2="811.5" y2="247.7" class="gd"/><line x1="851.8" y1="169.5" x2="851.8" y2="247.7" class="gd"/><line x1="892.1" y1="169.5" x2="892.1" y2="247.7" class="gd"/><line x1="932.4" y1="169.5" x2="932.4" y2="247.7" class="gd"/><line x1="553.4" y1="188.5" x2="956.5" y2="188.5" class="gh" stroke="#868686"/><line x1="553.4" y1="208.25" x2="956.5" y2="208.25" class="gh" stroke="#868686"/><line x1="553.4" y1="228" x2="956.5" y2="228" class="gh" stroke="#5a5a5a"/><line x1="549.8" y1="247.75" x2="553.4" y2="247.75" class="tk"/><line x1="551.4" y1="242.81" x2="553.4" y2="242.81" class="tm"/><line x1="551.4" y1="237.88" x2="553.4" y2="237.88" class="tm"/><line x1="551.4" y1="232.94" x2="553.4" y2="232.94" class="tm"/><line x1="549.8" y1="228" x2="553.4" y2="228" class="tk"/><line x1="551.4" y1="223.06" x2="553.4" y2="223.06" class="tm"/><line x1="551.4" y1="218.12" x2="553.4" y2="218.12" class="tm"/><line x1="551.4" y1="213.19" x2="553.4" y2="213.19" class="tm"/><line x1="549.8" y1="208.25" x2="553.4" y2="208.25" class="tk"/><line x1="551.4" y1="203.31" x2="553.4" y2="203.31" class="tm"/><line x1="551.4" y1="198.38" x2="553.4" y2="198.38" class="tm"/><line x1="551.4" y1="193.44" x2="553.4" y2="193.44" class="tm"/><line x1="549.8" y1="188.5" x2="553.4" y2="188.5" class="tk"/><line x1="551.4" y1="183.56" x2="553.4" y2="183.56" class="tm"/><line x1="551.4" y1="178.62" x2="553.4" y2="178.62" class="tm"/><line x1="551.4" y1="173.69" x2="553.4" y2="173.69" class="tm"/><line x1="559.62" y1="247.7" x2="559.62" y2="250" class="tm"/><line x1="569.7" y1="247.7" x2="569.7" y2="251.3" class="tk"/><line x1="579.78" y1="247.7" x2="579.78" y2="250" class="tm"/><line x1="589.85" y1="247.7" x2="589.85" y2="250" class="tm"/><line x1="599.93" y1="247.7" x2="599.93" y2="250" class="tm"/><line x1="610" y1="247.7" x2="610" y2="251.3" class="tk"/><line x1="620.08" y1="247.7" x2="620.08" y2="250" class="tm"/><line x1="630.15" y1="247.7" x2="630.15" y2="250" class="tm"/><line x1="640.23" y1="247.7" x2="640.23" y2="250" class="tm"/><line x1="650.3" y1="247.7" x2="650.3" y2="251.3" class="tk"/><line x1="660.38" y1="247.7" x2="660.38" y2="250" class="tm"/><line x1="670.45" y1="247.7" x2="670.45" y2="250" class="tm"/><line x1="680.53" y1="247.7" x2="680.53" y2="250" class="tm"/><line x1="690.6" y1="247.7" x2="690.6" y2="251.3" class="tk"/><line x1="700.68" y1="247.7" x2="700.68" y2="250" class="tm"/><line x1="710.75" y1="247.7" x2="710.75" y2="250" class="tm"/><line x1="720.83" y1="247.7" x2="720.83" y2="250" class="tm"/><line x1="730.9" y1="247.7" x2="730.9" y2="251.3" class="tk"/><line x1="740.98" y1="247.7" x2="740.98" y2="250" class="tm"/><line x1="751.05" y1="247.7" x2="751.05" y2="250" class="tm"/><line x1="761.12" y1="247.7" x2="761.12" y2="250" class="tm"/><line x1="771.2" y1="247.7" x2="771.2" y2="251.3" class="tk"/><line x1="781.28" y1="247.7" x2="781.28" y2="250" class="tm"/><line x1="791.35" y1="247.7" x2="791.35" y2="250" class="tm"/><line x1="801.43" y1="247.7" x2="801.43" y2="250" class="tm"/><line x1="811.5" y1="247.7" x2="811.5" y2="251.3" class="tk"/><line x1="821.58" y1="247.7" x2="821.58" y2="250" class="tm"/><line x1="831.65" y1="247.7" x2="831.65" y2="250" class="tm"/><line x1="841.73" y1="247.7" x2="841.73" y2="250" class="tm"/><line x1="851.8" y1="247.7" x2="851.8" y2="251.3" class="tk"/><line x1="861.88" y1="247.7" x2="861.88" y2="250" class="tm"/><line x1="871.95" y1="247.7" x2="871.95" y2="250" class="tm"/><line x1="882.03" y1="247.7" x2="882.03" y2="250" class="tm"/><line x1="892.1" y1="247.7" x2="892.1" y2="251.3" class="tk"/><line x1="902.18" y1="247.7" x2="902.18" y2="250" class="tm"/><line x1="912.25" y1="247.7" x2="912.25" y2="250" class="tm"/><line x1="922.33" y1="247.7" x2="922.33" y2="250" class="tm"/><line x1="932.4" y1="247.7" x2="932.4" y2="251.3" class="tk"/><line x1="942.48" y1="247.7" x2="942.48" y2="250" class="tm"/><line x1="952.55" y1="247.7" x2="952.55" y2="250" class="tm"/><path d="M553.4,247.7 V169.5 H956.5 V247.7 Z" fill="none" stroke="#727272" stroke-width="1.1"/><line x1="553.4" y1="247.7" x2="957" y2="247.7" stroke="#5a5a5a" stroke-width="1.2"/><line x1="553.4" y1="169" x2="553.4" y2="248.2" stroke="#1a1a1a" stroke-width="1.3"/><clipPath id="cR141"><rect x="553.4" y="168.5" width="403.7" height="80.7"/></clipPath><polyline points="553.58,189.8 561.64,189.6 565.67,188 573.73,187.8 674.48,187.8 682.54,194.2 690.6,189.6 698.66,188.2 706.72,187.8 714.78,190 722.84,191.2 730.9,191.3 738.96,192.6 747.02,192.7 755.08,194.2 763.14,194.2 771.2,190.2 779.26,194.3 827.62,194.3 835.68,196 892.1,196 900.16,197.4 924.34,197.4 932.4,196 940.46,192.3 948.52,189.6 956.58,185.6" fill="none" stroke="#0000ff" stroke-width="1.7" stroke-linejoin="round" clip-path="url(#cR141)"/><clipPath id="lR141"><rect x="513.4" y="168.9" width="40" height="88.2"/></clipPath><g clip-path="url(#lR141)"><text x="547.8" y="172.25" text-anchor="end" class="lb">20</text><text x="547.8" y="192" text-anchor="end" class="lb">10</text><text x="547.8" y="211.75" text-anchor="end" class="lb">0</text><text x="547.8" y="231.5" text-anchor="end" class="lb">-10</text><text x="547.8" y="251.25" text-anchor="end" class="lb">-20</text></g><text x="569.5" y="260.9" text-anchor="middle" class="lb">60</text><text x="609.8" y="260.9" text-anchor="middle" class="lb">65</text><text x="650.1" y="260.9" text-anchor="middle" class="lb">70</text><text x="690.4" y="260.9" text-anchor="middle" class="lb">75</text><text x="730.7" y="260.9" text-anchor="middle" class="lb">80</text><text x="771" y="260.9" text-anchor="middle" class="lb">85</text><text x="811.3" y="260.9" text-anchor="middle" class="lb">90</text><text x="851.6" y="260.9" text-anchor="middle" class="lb">95</text><text x="891.9" y="260.9" text-anchor="middle" class="lb">100</text><text x="932.2" y="260.9" text-anchor="middle" class="lb">105</text><clipPath id="rR141"><rect x="504" y="141" width="20" height="120"/></clipPath><g clip-path="url(#rR141)"><text transform="translate(514.7,206.3) rotate(-90)" text-anchor="middle" class="lr">X</text><text transform="translate(514.7,213.9) rotate(-90)" text-anchor="middle" class="lr">&lt;</text><text transform="translate(514.7,198.7) rotate(-90)" text-anchor="middle" class="lr">&lt;</text><text transform="translate(514.7,224.4) rotate(-90)" text-anchor="end" class="lr">-20</text><text transform="translate(514.7,188.9) rotate(-90)" text-anchor="start" class="lr">20</text></g></svg>
<div class="a sl" style="left:961px;top:172.8px;width:6.8px;height:71.5px"></div>
<div class="a th" style="left:960px;top:233.5px;width:9px;height:4.2px"></div>
<div class="a sl" style="left:971.2px;top:172.8px;width:6.8px;height:71.5px"></div>
<div class="a th" style="left:970.2px;top:206.2px;width:9px;height:4.2px"></div><div class="a" style="left:20px;top:274px;width:477px;height:126px;border:1px solid #c9c9c9;border-right-color:#b5b5b5;border-bottom-color:#b5b5b5"></div>
<div class="t" style="left:31px;top:285px;font-size:9.6px;font-weight:bold;color:#008000">kPa</div>
<div class="a dd" style="left:120.5px;top:281px;width:371px;height:16px"><span class="ddt">0B - Intake Manifold Absolute Pressure</span><span class="dda"></span></div>
<svg class="a" style="left:0;top:0" width="1000" height="625"><line x1="86.4" y1="301.8" x2="86.4" y2="380.1" class="gd"/><line x1="126.65" y1="301.8" x2="126.65" y2="380.1" class="gd"/><line x1="166.9" y1="301.8" x2="166.9" y2="380.1" class="gd"/><line x1="207.15" y1="301.8" x2="207.15" y2="380.1" class="gd"/><line x1="247.4" y1="301.8" x2="247.4" y2="380.1" class="gd"/><line x1="287.65" y1="301.8" x2="287.65" y2="380.1" class="gd"/><line x1="327.9" y1="301.8" x2="327.9" y2="380.1" class="gd"/><line x1="368.15" y1="301.8" x2="368.15" y2="380.1" class="gd"/><line x1="408.4" y1="301.8" x2="408.4" y2="380.1" class="gd"/><line x1="448.65" y1="301.8" x2="448.65" y2="380.1" class="gd"/><line x1="69.9" y1="316.4" x2="473.3" y2="316.4" class="gh" stroke="#868686"/><line x1="69.9" y1="337.07" x2="473.3" y2="337.07" class="gh" stroke="#868686"/><line x1="69.9" y1="357.73" x2="473.3" y2="357.73" class="gh" stroke="#868686"/><line x1="69.9" y1="378.4" x2="473.3" y2="378.4" class="gh" stroke="#5a5a5a"/><line x1="66.3" y1="378.4" x2="69.9" y2="378.4" class="tk"/><line x1="67.9" y1="373.23" x2="69.9" y2="373.23" class="tm"/><line x1="67.9" y1="368.07" x2="69.9" y2="368.07" class="tm"/><line x1="67.9" y1="362.9" x2="69.9" y2="362.9" class="tm"/><line x1="66.3" y1="357.73" x2="69.9" y2="357.73" class="tk"/><line x1="67.9" y1="352.57" x2="69.9" y2="352.57" class="tm"/><line x1="67.9" y1="347.4" x2="69.9" y2="347.4" class="tm"/><line x1="67.9" y1="342.23" x2="69.9" y2="342.23" class="tm"/><line x1="66.3" y1="337.07" x2="69.9" y2="337.07" class="tk"/><line x1="67.9" y1="331.9" x2="69.9" y2="331.9" class="tm"/><line x1="67.9" y1="326.73" x2="69.9" y2="326.73" class="tm"/><line x1="67.9" y1="321.57" x2="69.9" y2="321.57" class="tm"/><line x1="66.3" y1="316.4" x2="69.9" y2="316.4" class="tk"/><line x1="67.9" y1="311.23" x2="69.9" y2="311.23" class="tm"/><line x1="67.9" y1="306.07" x2="69.9" y2="306.07" class="tm"/><line x1="76.34" y1="380.1" x2="76.34" y2="382.4" class="tm"/><line x1="86.4" y1="380.1" x2="86.4" y2="383.7" class="tk"/><line x1="96.46" y1="380.1" x2="96.46" y2="382.4" class="tm"/><line x1="106.53" y1="380.1" x2="106.53" y2="382.4" class="tm"/><line x1="116.59" y1="380.1" x2="116.59" y2="382.4" class="tm"/><line x1="126.65" y1="380.1" x2="126.65" y2="383.7" class="tk"/><line x1="136.71" y1="380.1" x2="136.71" y2="382.4" class="tm"/><line x1="146.78" y1="380.1" x2="146.78" y2="382.4" class="tm"/><line x1="156.84" y1="380.1" x2="156.84" y2="382.4" class="tm"/><line x1="166.9" y1="380.1" x2="166.9" y2="383.7" class="tk"/><line x1="176.96" y1="380.1" x2="176.96" y2="382.4" class="tm"/><line x1="187.03" y1="380.1" x2="187.03" y2="382.4" class="tm"/><line x1="197.09" y1="380.1" x2="197.09" y2="382.4" class="tm"/><line x1="207.15" y1="380.1" x2="207.15" y2="383.7" class="tk"/><line x1="217.21" y1="380.1" x2="217.21" y2="382.4" class="tm"/><line x1="227.28" y1="380.1" x2="227.28" y2="382.4" class="tm"/><line x1="237.34" y1="380.1" x2="237.34" y2="382.4" class="tm"/><line x1="247.4" y1="380.1" x2="247.4" y2="383.7" class="tk"/><line x1="257.46" y1="380.1" x2="257.46" y2="382.4" class="tm"/><line x1="267.53" y1="380.1" x2="267.53" y2="382.4" class="tm"/><line x1="277.59" y1="380.1" x2="277.59" y2="382.4" class="tm"/><line x1="287.65" y1="380.1" x2="287.65" y2="383.7" class="tk"/><line x1="297.71" y1="380.1" x2="297.71" y2="382.4" class="tm"/><line x1="307.78" y1="380.1" x2="307.78" y2="382.4" class="tm"/><line x1="317.84" y1="380.1" x2="317.84" y2="382.4" class="tm"/><line x1="327.9" y1="380.1" x2="327.9" y2="383.7" class="tk"/><line x1="337.96" y1="380.1" x2="337.96" y2="382.4" class="tm"/><line x1="348.02" y1="380.1" x2="348.02" y2="382.4" class="tm"/><line x1="358.09" y1="380.1" x2="358.09" y2="382.4" class="tm"/><line x1="368.15" y1="380.1" x2="368.15" y2="383.7" class="tk"/><line x1="378.21" y1="380.1" x2="378.21" y2="382.4" class="tm"/><line x1="388.27" y1="380.1" x2="388.27" y2="382.4" class="tm"/><line x1="398.34" y1="380.1" x2="398.34" y2="382.4" class="tm"/><line x1="408.4" y1="380.1" x2="408.4" y2="383.7" class="tk"/><line x1="418.46" y1="380.1" x2="418.46" y2="382.4" class="tm"/><line x1="428.53" y1="380.1" x2="428.53" y2="382.4" class="tm"/><line x1="438.59" y1="380.1" x2="438.59" y2="382.4" class="tm"/><line x1="448.65" y1="380.1" x2="448.65" y2="383.7" class="tk"/><line x1="458.71" y1="380.1" x2="458.71" y2="382.4" class="tm"/><line x1="468.78" y1="380.1" x2="468.78" y2="382.4" class="tm"/><path d="M69.9,380.1 V301.8 H473.3 V380.1 Z" fill="none" stroke="#727272" stroke-width="1.1"/><line x1="69.9" y1="380.1" x2="473.8" y2="380.1" stroke="#5a5a5a" stroke-width="1.2"/><line x1="69.9" y1="301.3" x2="69.9" y2="380.6" stroke="#4a4a4a" stroke-width="1.3"/><clipPath id="cL274"><rect x="69.9" y="300.8" width="404" height="80.8"/></clipPath><polyline points="70.3,364.2 78.35,364.2 82.38,363.2 88.81,363.2 91.23,364.2 166.9,364.2 174.95,363.4 179.78,360.8 183,359.1 186.22,359.4 191.05,366.7 195.08,369.4 199.1,369.8 205.54,369.4 211.98,369.4 215.2,370 220.03,369.6 224.86,369.6 227.28,370.3 243.38,370.3 247.4,369 287.65,369 292.48,370.4 303.75,370.4 307.78,369.4 313.41,369.4 316.63,370.4 337.56,370.4 340.78,369.4 348.83,369.4 352.05,370.4 368.15,370.4 371.37,369.4 376.2,369.4 380.23,370.4 389.08,370.4 392.3,369 398.74,369 403.57,370.4 411.62,370.4 414.84,369 426.11,369 429.33,370.4 448.65,370.4 456.7,364.8 464.75,364.8 468.78,365.5 472.8,365.5" fill="none" stroke="#008000" stroke-width="1.7" stroke-linejoin="round" clip-path="url(#cL274)"/><clipPath id="lL274"><rect x="29.9" y="301.2" width="40" height="88.3"/></clipPath><g clip-path="url(#lL274)"><text x="64.3" y="319.9" text-anchor="end" class="lb">80</text><text x="64.3" y="340.57" text-anchor="end" class="lb">60</text><text x="64.3" y="361.23" text-anchor="end" class="lb">40</text><text x="64.3" y="381.9" text-anchor="end" class="lb">20</text></g><text x="86.2" y="393.3" text-anchor="middle" class="lb">60</text><text x="126.45" y="393.3" text-anchor="middle" class="lb">65</text><text x="166.7" y="393.3" text-anchor="middle" class="lb">70</text><text x="206.95" y="393.3" text-anchor="middle" class="lb">75</text><text x="247.2" y="393.3" text-anchor="middle" class="lb">80</text><text x="287.45" y="393.3" text-anchor="middle" class="lb">85</text><text x="327.7" y="393.3" text-anchor="middle" class="lb">90</text><text x="367.95" y="393.3" text-anchor="middle" class="lb">95</text><text x="408.2" y="393.3" text-anchor="middle" class="lb">100</text><text x="448.45" y="393.3" text-anchor="middle" class="lb">105</text><clipPath id="rL274"><rect x="20" y="274" width="20" height="120"/></clipPath><g clip-path="url(#rL274)"><text transform="translate(31.3,340.6) rotate(-90)" text-anchor="middle" class="lr">X</text><text transform="translate(31.3,348.2) rotate(-90)" text-anchor="middle" class="lr">&lt;</text><text transform="translate(31.3,333) rotate(-90)" text-anchor="middle" class="lr">&lt;</text><text transform="translate(31.3,358.7) rotate(-90)" text-anchor="end" class="lr">17.85</text><text transform="translate(31.3,323.2) rotate(-90)" text-anchor="start" class="lr">94.35</text></g></svg>
<div class="a sl" style="left:477px;top:305.8px;width:6.8px;height:71.5px"></div>
<div class="a th" style="left:476px;top:358.5px;width:9px;height:4.2px"></div>
<div class="a sl" style="left:487.2px;top:305.8px;width:6.8px;height:71.5px"></div>
<div class="a th" style="left:486.2px;top:366.8px;width:9px;height:4.2px"></div><div class="a" style="left:504px;top:274px;width:477px;height:126px;border:1px solid #c9c9c9;border-right-color:#b5b5b5;border-bottom-color:#b5b5b5"></div>
<div class="t" style="left:515px;top:285px;font-size:9.6px;font-weight:bold;color:#800000">%</div>
<div class="a dd" style="left:604.5px;top:281px;width:371px;height:16px"><span class="ddt">11 - Absolute Throttle Position</span><span class="dda"></span></div>
<svg class="a" style="left:0;top:0" width="1000" height="625"><line x1="569.7" y1="301.8" x2="569.7" y2="380.1" class="gd"/><line x1="610" y1="301.8" x2="610" y2="380.1" class="gd"/><line x1="650.3" y1="301.8" x2="650.3" y2="380.1" class="gd"/><line x1="690.6" y1="301.8" x2="690.6" y2="380.1" class="gd"/><line x1="730.9" y1="301.8" x2="730.9" y2="380.1" class="gd"/><line x1="771.2" y1="301.8" x2="771.2" y2="380.1" class="gd"/><line x1="811.5" y1="301.8" x2="811.5" y2="380.1" class="gd"/><line x1="851.8" y1="301.8" x2="851.8" y2="380.1" class="gd"/><line x1="892.1" y1="301.8" x2="892.1" y2="380.1" class="gd"/><line x1="932.4" y1="301.8" x2="932.4" y2="380.1" class="gd"/><line x1="553.4" y1="321.2" x2="956.5" y2="321.2" class="gh" stroke="#5a5a5a"/><line x1="553.4" y1="340.83" x2="956.5" y2="340.83" class="gh" stroke="#868686"/><line x1="553.4" y1="360.47" x2="956.5" y2="360.47" class="gh" stroke="#5a5a5a"/><line x1="549.8" y1="380.1" x2="553.4" y2="380.1" class="tk"/><line x1="551.4" y1="375.19" x2="553.4" y2="375.19" class="tm"/><line x1="551.4" y1="370.28" x2="553.4" y2="370.28" class="tm"/><line x1="551.4" y1="365.38" x2="553.4" y2="365.38" class="tm"/><line x1="549.8" y1="360.47" x2="553.4" y2="360.47" class="tk"/><line x1="551.4" y1="355.56" x2="553.4" y2="355.56" class="tm"/><line x1="551.4" y1="350.65" x2="553.4" y2="350.65" class="tm"/><line x1="551.4" y1="345.74" x2="553.4" y2="345.74" class="tm"/><line x1="549.8" y1="340.83" x2="553.4" y2="340.83" class="tk"/><line x1="551.4" y1="335.93" x2="553.4" y2="335.93" class="tm"/><line x1="551.4" y1="331.02" x2="553.4" y2="331.02" class="tm"/><line x1="551.4" y1="326.11" x2="553.4" y2="326.11" class="tm"/><line x1="549.8" y1="321.2" x2="553.4" y2="321.2" class="tk"/><line x1="551.4" y1="316.29" x2="553.4" y2="316.29" class="tm"/><line x1="551.4" y1="311.38" x2="553.4" y2="311.38" class="tm"/><line x1="551.4" y1="306.47" x2="553.4" y2="306.47" class="tm"/><line x1="549.8" y1="301.57" x2="553.4" y2="301.57" class="tk"/><line x1="559.62" y1="380.1" x2="559.62" y2="382.4" class="tm"/><line x1="569.7" y1="380.1" x2="569.7" y2="383.7" class="tk"/><line x1="579.78" y1="380.1" x2="579.78" y2="382.4" class="tm"/><line x1="589.85" y1="380.1" x2="589.85" y2="382.4" class="tm"/><line x1="599.93" y1="380.1" x2="599.93" y2="382.4" class="tm"/><line x1="610" y1="380.1" x2="610" y2="383.7" class="tk"/><line x1="620.08" y1="380.1" x2="620.08" y2="382.4" class="tm"/><line x1="630.15" y1="380.1" x2="630.15" y2="382.4" class="tm"/><line x1="640.23" y1="380.1" x2="640.23" y2="382.4" class="tm"/><line x1="650.3" y1="380.1" x2="650.3" y2="383.7" class="tk"/><line x1="660.38" y1="380.1" x2="660.38" y2="382.4" class="tm"/><line x1="670.45" y1="380.1" x2="670.45" y2="382.4" class="tm"/><line x1="680.53" y1="380.1" x2="680.53" y2="382.4" class="tm"/><line x1="690.6" y1="380.1" x2="690.6" y2="383.7" class="tk"/><line x1="700.68" y1="380.1" x2="700.68" y2="382.4" class="tm"/><line x1="710.75" y1="380.1" x2="710.75" y2="382.4" class="tm"/><line x1="720.83" y1="380.1" x2="720.83" y2="382.4" class="tm"/><line x1="730.9" y1="380.1" x2="730.9" y2="383.7" class="tk"/><line x1="740.98" y1="380.1" x2="740.98" y2="382.4" class="tm"/><line x1="751.05" y1="380.1" x2="751.05" y2="382.4" class="tm"/><line x1="761.12" y1="380.1" x2="761.12" y2="382.4" class="tm"/><line x1="771.2" y1="380.1" x2="771.2" y2="383.7" class="tk"/><line x1="781.28" y1="380.1" x2="781.28" y2="382.4" class="tm"/><line x1="791.35" y1="380.1" x2="791.35" y2="382.4" class="tm"/><line x1="801.43" y1="380.1" x2="801.43" y2="382.4" class="tm"/><line x1="811.5" y1="380.1" x2="811.5" y2="383.7" class="tk"/><line x1="821.58" y1="380.1" x2="821.58" y2="382.4" class="tm"/><line x1="831.65" y1="380.1" x2="831.65" y2="382.4" class="tm"/><line x1="841.73" y1="380.1" x2="841.73" y2="382.4" class="tm"/><line x1="851.8" y1="380.1" x2="851.8" y2="383.7" class="tk"/><line x1="861.88" y1="380.1" x2="861.88" y2="382.4" class="tm"/><line x1="871.95" y1="380.1" x2="871.95" y2="382.4" class="tm"/><line x1="882.03" y1="380.1" x2="882.03" y2="382.4" class="tm"/><line x1="892.1" y1="380.1" x2="892.1" y2="383.7" class="tk"/><line x1="902.18" y1="380.1" x2="902.18" y2="382.4" class="tm"/><line x1="912.25" y1="380.1" x2="912.25" y2="382.4" class="tm"/><line x1="922.33" y1="380.1" x2="922.33" y2="382.4" class="tm"/><line x1="932.4" y1="380.1" x2="932.4" y2="383.7" class="tk"/><line x1="942.48" y1="380.1" x2="942.48" y2="382.4" class="tm"/><line x1="952.55" y1="380.1" x2="952.55" y2="382.4" class="tm"/><path d="M553.4,380.1 V301.8 H956.5 V380.1 Z" fill="none" stroke="#727272" stroke-width="1.1"/><line x1="553.4" y1="380.1" x2="957" y2="380.1" stroke="#5a5a5a" stroke-width="1.2"/><line x1="553.4" y1="301.3" x2="553.4" y2="380.6" stroke="#1a1a1a" stroke-width="1.3"/><clipPath id="cR274"><rect x="553.4" y="300.8" width="403.7" height="80.8"/></clipPath><polyline points="553.58,380.1 658.36,380.1 666.42,361.2 924.34,361.2 932.4,380.1 956.58,380.1" fill="none" stroke="#800000" stroke-width="1.7" stroke-linejoin="round" clip-path="url(#cR274)"/><clipPath id="lR274"><rect x="513.4" y="301.2" width="40" height="88.3"/></clipPath><g clip-path="url(#lR274)"><text x="547.8" y="305.07" text-anchor="end" class="lb">20</text><text x="547.8" y="324.7" text-anchor="end" class="lb">15</text><text x="547.8" y="344.33" text-anchor="end" class="lb">10</text><text x="547.8" y="363.97" text-anchor="end" class="lb">5</text><text x="547.8" y="383.6" text-anchor="end" class="lb">0</text></g><text x="569.5" y="393.3" text-anchor="middle" class="lb">60</text><text x="609.8" y="393.3" text-anchor="middle" class="lb">65</text><text x="650.1" y="393.3" text-anchor="middle" class="lb">70</text><text x="690.4" y="393.3" text-anchor="middle" class="lb">75</text><text x="730.7" y="393.3" text-anchor="middle" class="lb">80</text><text x="771" y="393.3" text-anchor="middle" class="lb">85</text><text x="811.3" y="393.3" text-anchor="middle" class="lb">90</text><text x="851.6" y="393.3" text-anchor="middle" class="lb">95</text><text x="891.9" y="393.3" text-anchor="middle" class="lb">100</text><text x="932.2" y="393.3" text-anchor="middle" class="lb">105</text><clipPath id="rR274"><rect x="504" y="274" width="20" height="120"/></clipPath><g clip-path="url(#rR274)"><text transform="translate(514.7,343.2) rotate(-90)" text-anchor="middle" class="lr">X</text><text transform="translate(514.7,350.8) rotate(-90)" text-anchor="middle" class="lr">&lt;</text><text transform="translate(514.7,335.6) rotate(-90)" text-anchor="middle" class="lr">&lt;</text><text transform="translate(514.7,361.3) rotate(-90)" text-anchor="end" class="lr">0</text><text transform="translate(514.7,325.8) rotate(-90)" text-anchor="start" class="lr">20</text></g></svg>
<div class="a sl" style="left:961px;top:305.8px;width:6.8px;height:71.5px"></div>
<div class="a th" style="left:960px;top:366px;width:9px;height:4.2px"></div>
<div class="a sl" style="left:971.2px;top:305.8px;width:6.8px;height:71.5px"></div>
<div class="a th" style="left:970.2px;top:373.3px;width:9px;height:4.2px"></div><div class="a" style="left:20px;top:407px;width:477px;height:126px;border:1px solid #c9c9c9;border-right-color:#b5b5b5;border-bottom-color:#b5b5b5"></div>
<div class="t" style="left:31px;top:418px;font-size:9.6px;font-weight:bold;color:#808000">rpm</div>
<div class="a dd" style="left:120.5px;top:414px;width:371px;height:16px"><span class="ddt">0C - Engine RPM</span><span class="dda"></span></div>
<svg class="a" style="left:0;top:0" width="1000" height="625"><line x1="86.4" y1="434.6" x2="86.4" y2="513.2" class="gd"/><line x1="126.65" y1="434.6" x2="126.65" y2="513.2" class="gd"/><line x1="166.9" y1="434.6" x2="166.9" y2="513.2" class="gd"/><line x1="207.15" y1="434.6" x2="207.15" y2="513.2" class="gd"/><line x1="247.4" y1="434.6" x2="247.4" y2="513.2" class="gd"/><line x1="287.65" y1="434.6" x2="287.65" y2="513.2" class="gd"/><line x1="327.9" y1="434.6" x2="327.9" y2="513.2" class="gd"/><line x1="368.15" y1="434.6" x2="368.15" y2="513.2" class="gd"/><line x1="408.4" y1="434.6" x2="408.4" y2="513.2" class="gd"/><line x1="448.65" y1="434.6" x2="448.65" y2="513.2" class="gd"/><line x1="69.9" y1="449.5" x2="473.3" y2="449.5" class="gh" stroke="#5a5a5a"/><line x1="69.9" y1="465.77" x2="473.3" y2="465.77" class="gh" stroke="#b6b6b6"/><line x1="69.9" y1="482.03" x2="473.3" y2="482.03" class="gh" stroke="#5a5a5a"/><line x1="69.9" y1="498.3" x2="473.3" y2="498.3" class="gh" stroke="#868686"/><line x1="67.9" y1="510.5" x2="69.9" y2="510.5" class="tm"/><line x1="67.9" y1="506.43" x2="69.9" y2="506.43" class="tm"/><line x1="67.9" y1="502.37" x2="69.9" y2="502.37" class="tm"/><line x1="66.3" y1="498.3" x2="69.9" y2="498.3" class="tk"/><line x1="67.9" y1="494.23" x2="69.9" y2="494.23" class="tm"/><line x1="67.9" y1="490.17" x2="69.9" y2="490.17" class="tm"/><line x1="67.9" y1="486.1" x2="69.9" y2="486.1" class="tm"/><line x1="66.3" y1="482.03" x2="69.9" y2="482.03" class="tk"/><line x1="67.9" y1="477.97" x2="69.9" y2="477.97" class="tm"/><line x1="67.9" y1="473.9" x2="69.9" y2="473.9" class="tm"/><line x1="67.9" y1="469.83" x2="69.9" y2="469.83" class="tm"/><line x1="66.3" y1="465.77" x2="69.9" y2="465.77" class="tk"/><line x1="67.9" y1="461.7" x2="69.9" y2="461.7" class="tm"/><line x1="67.9" y1="457.63" x2="69.9" y2="457.63" class="tm"/><line x1="67.9" y1="453.57" x2="69.9" y2="453.57" class="tm"/><line x1="66.3" y1="449.5" x2="69.9" y2="449.5" class="tk"/><line x1="67.9" y1="445.43" x2="69.9" y2="445.43" class="tm"/><line x1="67.9" y1="441.37" x2="69.9" y2="441.37" class="tm"/><line x1="67.9" y1="437.3" x2="69.9" y2="437.3" class="tm"/><line x1="76.34" y1="513.2" x2="76.34" y2="515.5" class="tm"/><line x1="86.4" y1="513.2" x2="86.4" y2="516.8" class="tk"/><line x1="96.46" y1="513.2" x2="96.46" y2="515.5" class="tm"/><line x1="106.53" y1="513.2" x2="106.53" y2="515.5" class="tm"/><line x1="116.59" y1="513.2" x2="116.59" y2="515.5" class="tm"/><line x1="126.65" y1="513.2" x2="126.65" y2="516.8" class="tk"/><line x1="136.71" y1="513.2" x2="136.71" y2="515.5" class="tm"/><line x1="146.78" y1="513.2" x2="146.78" y2="515.5" class="tm"/><line x1="156.84" y1="513.2" x2="156.84" y2="515.5" class="tm"/><line x1="166.9" y1="513.2" x2="166.9" y2="516.8" class="tk"/><line x1="176.96" y1="513.2" x2="176.96" y2="515.5" class="tm"/><line x1="187.03" y1="513.2" x2="187.03" y2="515.5" class="tm"/><line x1="197.09" y1="513.2" x2="197.09" y2="515.5" class="tm"/><line x1="207.15" y1="513.2" x2="207.15" y2="516.8" class="tk"/><line x1="217.21" y1="513.2" x2="217.21" y2="515.5" class="tm"/><line x1="227.28" y1="513.2" x2="227.28" y2="515.5" class="tm"/><line x1="237.34" y1="513.2" x2="237.34" y2="515.5" class="tm"/><line x1="247.4" y1="513.2" x2="247.4" y2="516.8" class="tk"/><line x1="257.46" y1="513.2" x2="257.46" y2="515.5" class="tm"/><line x1="267.53" y1="513.2" x2="267.53" y2="515.5" class="tm"/><line x1="277.59" y1="513.2" x2="277.59" y2="515.5" class="tm"/><line x1="287.65" y1="513.2" x2="287.65" y2="516.8" class="tk"/><line x1="297.71" y1="513.2" x2="297.71" y2="515.5" class="tm"/><line x1="307.78" y1="513.2" x2="307.78" y2="515.5" class="tm"/><line x1="317.84" y1="513.2" x2="317.84" y2="515.5" class="tm"/><line x1="327.9" y1="513.2" x2="327.9" y2="516.8" class="tk"/><line x1="337.96" y1="513.2" x2="337.96" y2="515.5" class="tm"/><line x1="348.02" y1="513.2" x2="348.02" y2="515.5" class="tm"/><line x1="358.09" y1="513.2" x2="358.09" y2="515.5" class="tm"/><line x1="368.15" y1="513.2" x2="368.15" y2="516.8" class="tk"/><line x1="378.21" y1="513.2" x2="378.21" y2="515.5" class="tm"/><line x1="388.27" y1="513.2" x2="388.27" y2="515.5" class="tm"/><line x1="398.34" y1="513.2" x2="398.34" y2="515.5" class="tm"/><line x1="408.4" y1="513.2" x2="408.4" y2="516.8" class="tk"/><line x1="418.46" y1="513.2" x2="418.46" y2="515.5" class="tm"/><line x1="428.53" y1="513.2" x2="428.53" y2="515.5" class="tm"/><line x1="438.59" y1="513.2" x2="438.59" y2="515.5" class="tm"/><line x1="448.65" y1="513.2" x2="448.65" y2="516.8" class="tk"/><line x1="458.71" y1="513.2" x2="458.71" y2="515.5" class="tm"/><line x1="468.78" y1="513.2" x2="468.78" y2="515.5" class="tm"/><path d="M69.9,513.2 V434.6 H473.3 V513.2 Z" fill="none" stroke="#727272" stroke-width="1.1"/><line x1="69.9" y1="513.2" x2="473.8" y2="513.2" stroke="#5a5a5a" stroke-width="1.2"/><line x1="69.9" y1="434.1" x2="69.9" y2="513.7" stroke="#4a4a4a" stroke-width="1.3"/><clipPath id="cL407"><rect x="69.9" y="433.6" width="404" height="81.1"/></clipPath><polyline points="70.3,510.9 102.5,510.9 104.91,509.9 110.55,509.9 112.16,510.9 174.95,510.9 183,496.2 191.05,490.6 207.15,490.6 207.95,489.9 247.4,489.9 248.2,489.3 287.65,489.3 289.26,489.9 303.75,489.9 306.16,489.3 352.05,489.3 354.47,488.3 360.1,488.3 362.51,489.3 384.25,489.3 386.66,488.3 424.5,488.3 426.91,489.3 440.6,489.3 448.65,510.9 456.7,508.8 472.8,508.8" fill="none" stroke="#808000" stroke-width="1.7" stroke-linejoin="round" clip-path="url(#cL407)"/><clipPath id="lL407"><rect x="29.9" y="434" width="40" height="88.6"/></clipPath><g clip-path="url(#lL407)"><text x="64.3" y="453" text-anchor="end" class="lb">2,500</text><text x="64.3" y="469.27" text-anchor="end" class="lb">2,000</text><text x="64.3" y="485.53" text-anchor="end" class="lb">1,500</text><text x="64.3" y="501.8" text-anchor="end" class="lb">1,000</text></g><text x="86.2" y="526.4" text-anchor="middle" class="lb">60</text><text x="126.45" y="526.4" text-anchor="middle" class="lb">65</text><text x="166.7" y="526.4" text-anchor="middle" class="lb">70</text><text x="206.95" y="526.4" text-anchor="middle" class="lb">75</text><text x="247.2" y="526.4" text-anchor="middle" class="lb">80</text><text x="287.45" y="526.4" text-anchor="middle" class="lb">85</text><text x="327.7" y="526.4" text-anchor="middle" class="lb">90</text><text x="367.95" y="526.4" text-anchor="middle" class="lb">95</text><text x="408.2" y="526.4" text-anchor="middle" class="lb">100</text><text x="448.45" y="526.4" text-anchor="middle" class="lb">105</text><clipPath id="rL407"><rect x="20" y="407" width="20" height="120"/></clipPath><g clip-path="url(#rL407)"><text transform="translate(31.3,475.6) rotate(-90)" text-anchor="middle" class="lr">X</text><text transform="translate(31.3,483.2) rotate(-90)" text-anchor="middle" class="lr">&lt;</text><text transform="translate(31.3,468) rotate(-90)" text-anchor="middle" class="lr">&lt;</text><text transform="translate(31.3,493.7) rotate(-90)" text-anchor="end" class="lr">560</text><text transform="translate(31.3,458.2) rotate(-90)" text-anchor="start" class="lr">2960</text></g></svg>
<div class="a sl" style="left:477px;top:438.8px;width:6.8px;height:71.5px"></div>
<div class="a th" style="left:476px;top:490.8px;width:9px;height:4.2px"></div>
<div class="a sl" style="left:487.2px;top:438.8px;width:6.8px;height:71.5px"></div>
<div class="a th" style="left:486.2px;top:499.4px;width:9px;height:4.2px"></div><div class="a" style="left:504px;top:407px;width:477px;height:126px;border:1px solid #c9c9c9;border-right-color:#b5b5b5;border-bottom-color:#b5b5b5"></div>
<div class="t" style="left:515px;top:418px;font-size:9.6px;font-weight:bold;color:#000080">°C</div>
<div class="a dd" style="left:604.5px;top:414px;width:371px;height:16px"><span class="ddt">05 - Engine Coolant Temperature</span><span class="dda"></span></div>
<svg class="a" style="left:0;top:0" width="1000" height="625"><line x1="569.7" y1="434.6" x2="569.7" y2="513.2" class="gd"/><line x1="610" y1="434.6" x2="610" y2="513.2" class="gd"/><line x1="650.3" y1="434.6" x2="650.3" y2="513.2" class="gd"/><line x1="690.6" y1="434.6" x2="690.6" y2="513.2" class="gd"/><line x1="730.9" y1="434.6" x2="730.9" y2="513.2" class="gd"/><line x1="771.2" y1="434.6" x2="771.2" y2="513.2" class="gd"/><line x1="811.5" y1="434.6" x2="811.5" y2="513.2" class="gd"/><line x1="851.8" y1="434.6" x2="851.8" y2="513.2" class="gd"/><line x1="892.1" y1="434.6" x2="892.1" y2="513.2" class="gd"/><line x1="932.4" y1="434.6" x2="932.4" y2="513.2" class="gd"/><line x1="553.4" y1="439" x2="956.5" y2="439" class="gh" stroke="#5a5a5a"/><line x1="553.4" y1="451.22" x2="956.5" y2="451.22" class="gh" stroke="#5a5a5a"/><line x1="553.4" y1="463.43" x2="956.5" y2="463.43" class="gh" stroke="#b6b6b6"/><line x1="553.4" y1="475.65" x2="956.5" y2="475.65" class="gh" stroke="#5a5a5a"/><line x1="553.4" y1="487.87" x2="956.5" y2="487.87" class="gh" stroke="#b6b6b6"/><line x1="553.4" y1="500.08" x2="956.5" y2="500.08" class="gh" stroke="#5a5a5a"/><line x1="553.4" y1="512.3" x2="956.5" y2="512.3" class="gh" stroke="#5a5a5a"/><line x1="549.8" y1="512.3" x2="553.4" y2="512.3" class="tk"/><line x1="551.4" y1="509.25" x2="553.4" y2="509.25" class="tm"/><line x1="551.4" y1="506.19" x2="553.4" y2="506.19" class="tm"/><line x1="551.4" y1="503.14" x2="553.4" y2="503.14" class="tm"/><line x1="549.8" y1="500.08" x2="553.4" y2="500.08" class="tk"/><line x1="551.4" y1="497.03" x2="553.4" y2="497.03" class="tm"/><line x1="551.4" y1="493.97" x2="553.4" y2="493.97" class="tm"/><line x1="551.4" y1="490.92" x2="553.4" y2="490.92" class="tm"/><line x1="549.8" y1="487.87" x2="553.4" y2="487.87" class="tk"/><line x1="551.4" y1="484.81" x2="553.4" y2="484.81" class="tm"/><line x1="551.4" y1="481.76" x2="553.4" y2="481.76" class="tm"/><line x1="551.4" y1="478.7" x2="553.4" y2="478.7" class="tm"/><line x1="549.8" y1="475.65" x2="553.4" y2="475.65" class="tk"/><line x1="551.4" y1="472.6" x2="553.4" y2="472.6" class="tm"/><line x1="551.4" y1="469.54" x2="553.4" y2="469.54" class="tm"/><line x1="551.4" y1="466.49" x2="553.4" y2="466.49" class="tm"/><line x1="549.8" y1="463.43" x2="553.4" y2="463.43" class="tk"/><line x1="551.4" y1="460.38" x2="553.4" y2="460.38" class="tm"/><line x1="551.4" y1="457.32" x2="553.4" y2="457.32" class="tm"/><line x1="551.4" y1="454.27" x2="553.4" y2="454.27" class="tm"/><line x1="549.8" y1="451.22" x2="553.4" y2="451.22" class="tk"/><line x1="551.4" y1="448.16" x2="553.4" y2="448.16" class="tm"/><line x1="551.4" y1="445.11" x2="553.4" y2="445.11" class="tm"/><line x1="551.4" y1="442.05" x2="553.4" y2="442.05" class="tm"/><line x1="549.8" y1="439" x2="553.4" y2="439" class="tk"/><line x1="551.4" y1="435.95" x2="553.4" y2="435.95" class="tm"/><line x1="559.62" y1="513.2" x2="559.62" y2="515.5" class="tm"/><line x1="569.7" y1="513.2" x2="569.7" y2="516.8" class="tk"/><line x1="579.78" y1="513.2" x2="579.78" y2="515.5" class="tm"/><line x1="589.85" y1="513.2" x2="589.85" y2="515.5" class="tm"/><line x1="599.93" y1="513.2" x2="599.93" y2="515.5" class="tm"/><line x1="610" y1="513.2" x2="610" y2="516.8" class="tk"/><line x1="620.08" y1="513.2" x2="620.08" y2="515.5" class="tm"/><line x1="630.15" y1="513.2" x2="630.15" y2="515.5" class="tm"/><line x1="640.23" y1="513.2" x2="640.23" y2="515.5" class="tm"/><line x1="650.3" y1="513.2" x2="650.3" y2="516.8" class="tk"/><line x1="660.38" y1="513.2" x2="660.38" y2="515.5" class="tm"/><line x1="670.45" y1="513.2" x2="670.45" y2="515.5" class="tm"/><line x1="680.53" y1="513.2" x2="680.53" y2="515.5" class="tm"/><line x1="690.6" y1="513.2" x2="690.6" y2="516.8" class="tk"/><line x1="700.68" y1="513.2" x2="700.68" y2="515.5" class="tm"/><line x1="710.75" y1="513.2" x2="710.75" y2="515.5" class="tm"/><line x1="720.83" y1="513.2" x2="720.83" y2="515.5" class="tm"/><line x1="730.9" y1="513.2" x2="730.9" y2="516.8" class="tk"/><line x1="740.98" y1="513.2" x2="740.98" y2="515.5" class="tm"/><line x1="751.05" y1="513.2" x2="751.05" y2="515.5" class="tm"/><line x1="761.12" y1="513.2" x2="761.12" y2="515.5" class="tm"/><line x1="771.2" y1="513.2" x2="771.2" y2="516.8" class="tk"/><line x1="781.28" y1="513.2" x2="781.28" y2="515.5" class="tm"/><line x1="791.35" y1="513.2" x2="791.35" y2="515.5" class="tm"/><line x1="801.43" y1="513.2" x2="801.43" y2="515.5" class="tm"/><line x1="811.5" y1="513.2" x2="811.5" y2="516.8" class="tk"/><line x1="821.58" y1="513.2" x2="821.58" y2="515.5" class="tm"/><line x1="831.65" y1="513.2" x2="831.65" y2="515.5" class="tm"/><line x1="841.73" y1="513.2" x2="841.73" y2="515.5" class="tm"/><line x1="851.8" y1="513.2" x2="851.8" y2="516.8" class="tk"/><line x1="861.88" y1="513.2" x2="861.88" y2="515.5" class="tm"/><line x1="871.95" y1="513.2" x2="871.95" y2="515.5" class="tm"/><line x1="882.03" y1="513.2" x2="882.03" y2="515.5" class="tm"/><line x1="892.1" y1="513.2" x2="892.1" y2="516.8" class="tk"/><line x1="902.18" y1="513.2" x2="902.18" y2="515.5" class="tm"/><line x1="912.25" y1="513.2" x2="912.25" y2="515.5" class="tm"/><line x1="922.33" y1="513.2" x2="922.33" y2="515.5" class="tm"/><line x1="932.4" y1="513.2" x2="932.4" y2="516.8" class="tk"/><line x1="942.48" y1="513.2" x2="942.48" y2="515.5" class="tm"/><line x1="952.55" y1="513.2" x2="952.55" y2="515.5" class="tm"/><path d="M553.4,513.2 V434.6 H956.5 V513.2 Z" fill="none" stroke="#727272" stroke-width="1.1"/><line x1="553.4" y1="513.2" x2="957" y2="513.2" stroke="#5a5a5a" stroke-width="1.2"/><line x1="553.4" y1="434.1" x2="553.4" y2="513.7" stroke="#1a1a1a" stroke-width="1.3"/><clipPath id="cR407"><rect x="553.4" y="433.6" width="403.7" height="81.1"/></clipPath><polyline points="553.58,459.6 722.84,459.6 724.45,460.6 956.58,460.6" fill="none" stroke="#000080" stroke-width="1.7" stroke-linejoin="round" clip-path="url(#cR407)"/><clipPath id="lR407"><rect x="513.4" y="434" width="40" height="88.6"/></clipPath><g clip-path="url(#lR407)"><text x="547.8" y="442.5" text-anchor="end" class="lb">120</text><text x="547.8" y="454.72" text-anchor="end" class="lb">100</text><text x="547.8" y="466.93" text-anchor="end" class="lb">80</text><text x="547.8" y="479.15" text-anchor="end" class="lb">60</text><text x="547.8" y="491.37" text-anchor="end" class="lb">40</text><text x="547.8" y="503.58" text-anchor="end" class="lb">20</text><text x="547.8" y="515.8" text-anchor="end" class="lb">0</text></g><text x="569.5" y="526.4" text-anchor="middle" class="lb">60</text><text x="609.8" y="526.4" text-anchor="middle" class="lb">65</text><text x="650.1" y="526.4" text-anchor="middle" class="lb">70</text><text x="690.4" y="526.4" text-anchor="middle" class="lb">75</text><text x="730.7" y="526.4" text-anchor="middle" class="lb">80</text><text x="771" y="526.4" text-anchor="middle" class="lb">85</text><text x="811.3" y="526.4" text-anchor="middle" class="lb">90</text><text x="851.6" y="526.4" text-anchor="middle" class="lb">95</text><text x="891.9" y="526.4" text-anchor="middle" class="lb">100</text><text x="932.2" y="526.4" text-anchor="middle" class="lb">105</text><clipPath id="rR407"><rect x="504" y="435.8" width="20" height="120"/></clipPath><g clip-path="url(#rR407)"><text transform="translate(514.7,476.4) rotate(-90)" text-anchor="middle" class="lr">X</text><text transform="translate(514.7,484) rotate(-90)" text-anchor="middle" class="lr">&lt;</text><text transform="translate(514.7,468.8) rotate(-90)" text-anchor="middle" class="lr">&lt;</text><text transform="translate(514.7,494.5) rotate(-90)" text-anchor="end" class="lr">-1.75</text><text transform="translate(514.7,459) rotate(-90)" text-anchor="start" class="lr">125.75</text></g></svg>
<div class="a sl" style="left:961px;top:438.8px;width:6.8px;height:71.5px"></div>
<div class="a th thf" style="left:960px;top:476px;width:9px;height:4.2px"></div>
<div class="a sl" style="left:971.2px;top:438.8px;width:6.8px;height:71.5px"></div>
<div class="a th" style="left:970.2px;top:486.4px;width:9px;height:4.2px"></div>
<div class="a" style="left:958.6px;top:434.3px;width:9.8px;height:80px;border:1px dotted #333"></div>

<svg class="a" style="left:885px;top:120px" width="25" height="25"><g transform="translate(5.4,5.1) scale(0.78)"><path d="M0,0 L0,16 L4,12.2 L6.8,18.6 L9.2,17.6 L6.5,11.4 L11.5,11.4 Z" fill="#fff" stroke="#1a1a28" stroke-width="1.15" stroke-linejoin="miter"/></g></svg>
<!-- buttons -->
<div class="btn" style="left:13px;top:548px;width:79.5px;height:17.5px"><span class="t" style="left:29px;top:4.2px;font-size:8.6px;color:#10101a">Read</span></div>
<div class="btn" style="left:99px;top:548px;width:80.5px;height:17.5px;border-color:#b8bcbf;background:#f4f4f4"><span class="t" style="left:30.5px;top:4.2px;font-size:8.6px;color:#a3a6aa">Stop</span></div>
<!-- slider -->
<div class="a" style="left:320px;top:548px;width:663.5px;height:10.6px;background:#e6e8e9;border-top:1px solid #d4d6d8;border-left:1px solid #d8d9db"></div>
<div class="a" style="left:500.2px;top:546px;width:5.8px;height:14.8px;border:1px solid #6c6c6c;border-radius:1.5px;background:linear-gradient(90deg,#f8f8f8,#dedede)"></div>
<!-- status bar -->
<div class="a" style="left:0;top:578px;width:999px;height:1px;background:#a8a8a8"></div>
<div class="a" style="left:0;top:579px;width:999px;height:1px;background:#fbfbfb"></div>
<div class="sbp" style="left:87.5px"></div><div class="a" style="left:88.5px;top:579px;width:1px;height:14px;background:#fff"></div>
<div class="sbp" style="left:154px"></div><div class="a" style="left:155px;top:579px;width:1px;height:14px;background:#fff"></div>
<div class="sbp" style="left:202px"></div><div class="a" style="left:203px;top:579px;width:1px;height:14px;background:#fff"></div>
<div class="sbp" style="left:354px"></div><div class="a" style="left:355px;top:579px;width:1px;height:14px;background:#fff"></div>
<div class="t" style="left:2.8px;top:582px;font-size:8.6px;color:#10101a">Port:</div>
<div class="t" style="left:62.5px;top:582px;font-size:8.6px;color:#10101a">-</div>
<div class="gb" style="left:70px"></div>
<div class="t" style="left:91px;top:582px;font-size:8.6px;color:#10101a">Interface:</div>
<div class="gb" style="left:137px"></div>
<div class="t" style="left:157.5px;top:582px;font-size:8.6px;color:#10101a">ECU:</div>
<div class="gb" style="left:184px"></div>
<div class="t" style="left:644px;top:581.4px;font-size:9.2px;font-weight:bold;color:#1212e6">www.wgsoft.de</div>
<!-- taskbar -->
<div class="a" style="left:0;top:594px;width:1000px;height:31px;background:linear-gradient(#3a4450 0px,#1c232c 1.5px,#0e141b 4px,#0b1016 100%)"></div>
<svg class="a" style="left:0;top:594px" width="1000" height="31">
 <defs>
  <radialGradient id="orb" cx="50%" cy="55%" r="55%"><stop offset="0" stop-color="#2a88c8"/><stop offset="0.7" stop-color="#1a5a98"/><stop offset="1" stop-color="#9ab8d0"/></radialGradient>
  <linearGradient id="tbh" x1="0" y1="0" x2="0" y2="1"><stop offset="0" stop-color="#5a6068"/><stop offset="1" stop-color="#2a3038"/></linearGradient>
  <linearGradient id="tba" x1="0" y1="0" x2="0" y2="1"><stop offset="0" stop-color="#a0a4a8"/><stop offset="0.5" stop-color="#787c80"/><stop offset="1" stop-color="#5a5e62"/></linearGradient>
 </defs>
 <circle cx="21" cy="15.8" r="14.3" fill="url(#orb)" stroke="#1a3450" stroke-width="1"/>
 <ellipse cx="21" cy="25" rx="9" ry="4" fill="#30d8ff" opacity="0.55"/>
 <ellipse cx="21" cy="8.8" rx="10" ry="5.5" fill="#fff" opacity="0.16"/>
 <path d="M14.2,10.2 q3.2,-2 7,0 l-1.2,5.4 q-3.6,-1.8 -7,0z" fill="#f05a24"/>
 <path d="M22.2,10.6 q3.6,1.8 7.4,-0.4 l-1.2,5.6 q-3.6,2 -7.4,0.2z" fill="#8cc63e"/>
 <path d="M12.8,16.6 q3.4,-1.8 7,0 l-1.2,5.6 q-3.6,-1.8 -7,0z" fill="#2aa8e8"/>
 <path d="M20.8,17 q3.6,1.8 7.4,-0.2 l-1.2,5.6 q-3.6,2 -7.4,0.2z" fill="#fbbc1a"/>
 <path d="M63.5,16.8 h14.8 a7.6,7.6 0 1,0 -2,5.6" fill="none" stroke="#3ab4ee" stroke-width="4.4"/>
 <rect x="62" y="14.6" width="16" height="3.4" fill="#3ab4ee"/>
 <ellipse cx="70" cy="15.5" rx="13.5" ry="6" transform="rotate(-38 70 15.5)" fill="none" stroke="#f2c21a" stroke-width="1.8" stroke-dasharray="34 9 60"/>
 <rect x="95.5" y="1" width="45.5" height="29" rx="2" fill="url(#tbh)" stroke="#6a7078" stroke-width="0.8"/>
 <path d="M106,8 h9 l2,2 h14 v15 h-25z" fill="#e8c860"/><rect x="106" y="12" width="25" height="13" fill="#f8e8a0"/><rect x="111" y="17" width="15" height="6" fill="#5aa8e0"/><rect x="108" y="8.5" width="2" height="1.5" fill="#e03030"/><rect x="111" y="8.5" width="2" height="1.5" fill="#30a030"/>
 <rect x="155.5" y="6" width="19" height="19" rx="1.5" fill="#6ab0e0" stroke="#3a80c0" stroke-width="0.8"/><circle cx="165" cy="15.5" r="6.5" fill="#f07010"/><path d="M163,12 l5,3.5 l-5,3.5z" fill="#fff"/>
 <path d="M215.5,15.5 L205.11,9.50 A12,12 0 0,1 225.89,9.50 Z" fill="#db4437"/><path d="M215.5,15.5 L225.89,9.50 A12,12 0 0,1 215.50,27.50 Z" fill="#ffcd40"/><path d="M215.5,15.5 L215.50,27.50 A12,12 0 0,1 205.11,9.50 Z" fill="#0f9d58"/><circle cx="215.5" cy="15.5" r="5.8" fill="#fff"/><circle cx="215.5" cy="15.5" r="4.5" fill="#4285f4"/>
 <rect x="241" y="1" width="45" height="29" rx="2" fill="url(#tba)" stroke="#a8acb0" stroke-width="0.8"/>
 <g transform="translate(264,15) rotate(-26)"><rect x="-10" y="-4.5" width="20" height="9" rx="1" fill="#b8b8b8" stroke="#3a3a3a" stroke-width="1"/><rect x="-8.5" y="-3.5" width="17" height="3" fill="#d8d8d8"/><path d="M-7.5,4.5 v3 M-4.5,4.5 v3 M-1.5,4.5 v3 M1.5,4.5 v3 M4.5,4.5 v3 M7.5,4.5 v3" stroke="#2a2a2a" stroke-width="1.2"/></g>
 <path d="M842.5,18.5 l3.2,-3.5 l3.2,3.5z" fill="#e8e8e8"/>
 <rect x="861.5" y="10" width="7" height="12" rx="1.2" fill="#e8e8e8" stroke="#888" stroke-width="0.7"/><rect x="863" y="9" width="4" height="1.5" fill="#ccc"/><rect x="862.5" y="12" width="2.5" height="9" fill="#fff"/>
 <path d="M877.8,13 h3 l4,-3.5 v12.5 l-4,-3.5 h-3z" fill="#e8e8e8"/><path d="M886.5,12.5 q1.5,3 0,6 M888.5,11 q2.5,4.5 0,9" fill="none" stroke="#ccc" stroke-width="0.9"/>
 <rect x="897" y="19" width="1.6" height="2" fill="#ddd"/><rect x="899.5" y="17" width="1.6" height="4" fill="#ddd"/><rect x="902" y="14.5" width="1.6" height="6.5" fill="#ddd"/><rect x="904.5" y="12" width="1.6" height="9" fill="#ddd"/><rect x="907" y="9.5" width="1.6" height="11.5" fill="#ddd"/>
 <path d="M904,13.5 l4.5,8 h-9z" fill="#f0d020" stroke="#403000" stroke-width="0.4"/>
 <path d="M915,9 v13" stroke="#ddd" stroke-width="1.2"/><path d="M915.5,9.5 h7 l-1.5,2.5 l1.5,2.5 h-7z" fill="#f0f0f0"/>
 <circle cx="923.5" cy="19" r="3.8" fill="#e02020"/><path d="M921.8,17.3 l3.4,3.4 M925.2,17.3 l-3.4,3.4" stroke="#fff" stroke-width="1"/>
 <text x="961" y="13.4" text-anchor="middle" font-family="Liberation Sans" font-size="9.4" fill="#f4f4f4">1:30 PM</text>
 <text x="960.6" y="26.4" text-anchor="middle" font-family="Liberation Sans" font-size="9.4" fill="#f4f4f4">1/1/2022</text>
 <rect x="989.5" y="1" width="10" height="29" fill="#2a3038" stroke="#6a7078" stroke-width="0.8"/>
</svg>

</body></html>
